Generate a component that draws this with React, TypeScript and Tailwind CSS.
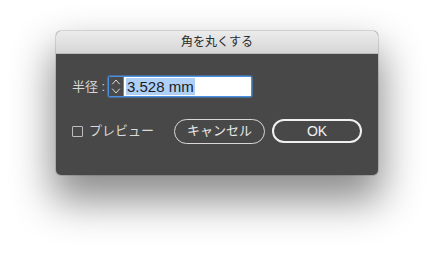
export default function App() {
  const jp = { fontFamily: '"Liberation Sans", "Noto Sans CJK JP", sans-serif' };

  return (
    <div className="w-[434px] h-[255px] bg-white overflow-hidden pl-[56px] pt-[31px]" style={jp}>
      <div className="w-[322px] h-[144px] rounded-[5px] overflow-hidden bg-[#484848] shadow-[0_22px_40px_4px_rgba(0,0,0,0.45),0_0_0_1px_rgba(0,0,0,0.12)] flex flex-col">
        {/* title bar */}
        <div className="h-[23px] shrink-0 bg-gradient-to-b from-[#ececec] to-[#d6d6d6] border-b border-[#b9b9b9] flex items-center justify-center text-[12px] text-[#2a2a2a] leading-none">
          角を丸くする
        </div>

        <div className="flex flex-col px-[16px] pt-[22px]">
          {/* radius field */}
          <div className="flex items-center h-[21px]">
            <span className="text-[13px] text-[#d6d6d6] w-[36px] whitespace-nowrap">半径 :</span>
            <div className="flex h-[21px] w-[144px] border border-[#4a8fe0] rounded-[2px] shadow-[0_0_0_1px_rgba(74,143,224,0.5)]">
              <div className="w-[15px] shrink-0 bg-[#4a4a4a] border-r border-[#4a8fe0] flex items-center justify-center">
                <svg width="10" height="17" viewBox="0 0 10 17" fill="none" stroke="#dcdcdc" strokeWidth="1" strokeLinecap="round" strokeLinejoin="round">
                  <path d="M1.5 6 L5 2 L8.5 6" />
                  <path d="M1.5 11 L5 15 L8.5 11" />
                </svg>
              </div>
              <div className="flex-1 bg-white flex items-center pl-[2px]">
                <span className="bg-[#aed0f7] text-[#1c1c1c] text-[15px] leading-[17px] px-[1px]">3.528 mm</span>
              </div>
            </div>
          </div>

          {/* bottom row */}
          <div className="flex items-center justify-between mt-[22px] h-[24px]">
            <label className="flex items-center gap-[6px] text-[13px] text-[#dadada]">
              <span className="w-[11px] h-[11px] border border-[#bdbdbd] rounded-[1px]" />
              プレビュー
            </label>
            <div className="flex items-center gap-[7px]">
              <button className="w-[91px] h-[25px] rounded-full border border-[#d8d8d8] text-[13px] text-[#e8e8e8] flex items-center justify-center">
                キャンセル
              </button>
              <button className="w-[90px] h-[24px] rounded-full border-2 border-[#f0f0f0] text-[14px] text-[#f2f2f2] flex items-center justify-center">
                OK
              </button>
            </div>
          </div>
        </div>
      </div>
    </div>
  );
}
